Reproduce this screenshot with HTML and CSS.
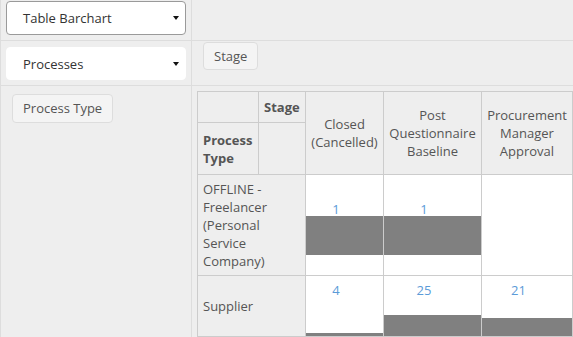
FILE: index.html
```html
<!DOCTYPE html>
<html lang="en">
<head>
<meta charset="utf-8">
<title>Pivot Table Barchart</title>
<link rel="stylesheet" href="styles.css">
</head>
<body>
<div class="pivot-ui">
  <div class="cell renderer-cell">
    <div class="dropdown focused">
      <span class="dropdown-text">Table Barchart</span>
      <svg class="caret" width="6" height="4" viewBox="0 0 6 4"><path d="M0 0H6L3 4Z"/></svg>
    </div>
  </div>
  <div class="cell unused-cell"></div>
  <div class="cell vals-cell">
    <div class="dropdown">
      <span class="dropdown-text">Processes</span>
      <svg class="caret" width="6" height="4" viewBox="0 0 6 4"><path d="M0 0H6L3 4Z"/></svg>
    </div>
  </div>
  <div class="cell cols-cell"><span class="attr">Stage</span></div>
  <div class="cell rows-cell"><span class="attr attr-tall">Process Type</span></div>
  <div class="cell output-cell">
    <table class="pvt-table">
      <colgroup>
        <col class="col-a"><col class="col-b"><col class="col-c"><col class="col-d"><col class="col-e"><col class="col-f">
      </colgroup>
      <thead>
        <tr class="hdr-top">
          <th class="corner"></th>
          <th class="axis-label">Stage</th>
          <th class="col-label" rowspan="2">Closed (Cancelled)</th>
          <th class="col-label" rowspan="2">Post Questionnaire Baseline</th>
          <th class="col-label" rowspan="2">Procurement Manager Approval</th>
          <th class="col-label" rowspan="2"></th>
        </tr>
        <tr class="hdr-bottom">
          <th class="axis-label row-axis">Process Type</th>
          <th class="corner"></th>
        </tr>
      </thead>
      <tbody>
        <tr class="data-row">
          <th class="row-label" colspan="2">OFFLINE - Freelancer (Personal Service Company)</th>
          <td class="val"><div class="bar-wrap"><div class="bar" style="height:71.4%"></div><span class="num">1</span></div></td>
          <td class="val"><div class="bar-wrap"><div class="bar" style="height:71.4%"></div><span class="num">1</span></div></td>
          <td class="val"></td>
          <td class="val"></td>
        </tr>
        <tr class="data-row">
          <th class="row-label" colspan="2">Supplier</th>
          <td class="val"><div class="bar-wrap"><div class="bar" style="height:5.5%"></div><span class="num">4</span></div></td>
          <td class="val"><div class="bar-wrap"><div class="bar" style="height:38.2%"></div><span class="num">25</span></div></td>
          <td class="val"><div class="bar-wrap"><div class="bar" style="height:32.7%"></div><span class="num">21</span></div></td>
          <td class="val"><div class="bar-wrap"><div class="bar" style="height:60%"></div></div></td>
        </tr>
      </tbody>
    </table>
  </div>
</div>
</body>
</html>
```

FILE: styles.css
```css
* { box-sizing: border-box; }

html, body {
  margin: 0;
  padding: 0;
  width: 573px;
  height: 337px;
  overflow: hidden;
  background: #eeeeee;
  font-family: "Open Sans", "Noto Sans", sans-serif;
  font-size: 13px;
  color: #555555;
}

.pivot-ui {
  display: grid;
  grid-template-columns: 190px 1fr;
  grid-template-rows: 40px 44px 1fr;
  gap: 1px;
  padding-left: 1px;
  width: 573px;
  height: 337px;
  background: #dddddd;
}

.cell {
  background: #eeeeee;
  min-width: 0;
  overflow: hidden;
}

.renderer-cell { padding: 1px 0 0 5px; }
.vals-cell { padding: 6px 0 0 5px; }

.dropdown {
  display: flex;
  align-items: center;
  justify-content: space-between;
  width: 180px;
  height: 33px;
  padding: 0 6px 0 16px;
  background: #ffffff;
  border: 1px solid #ffffff;
  border-radius: 4px;
  color: #333333;
  font-size: 13px;
}

.dropdown.focused {
  height: 34px;
  border-color: #9a9a9a;
}

.caret { fill: #111111; display: block; }

.cols-cell { padding: 1px 0 0 11px; }
.rows-cell { padding: 8px 0 0 11px; }

.attr {
  display: inline-block;
  height: 28px;
  line-height: 26px;
  padding: 0 10px;
  background: #f4f4f4;
  border: 1px solid #dddddd;
  border-radius: 4px;
  color: #555555;
  white-space: nowrap;
}

.attr-tall {
  height: 29px;
  line-height: 27px;
}

.output-cell { padding: 5px 0 0 5px; }

.pvt-table {
  border-collapse: collapse;
  table-layout: fixed;
  width: 466px;
  line-height: 18px;
  color: #555555;
}

.col-a { width: 61px; }
.col-b { width: 47px; }
.col-c { width: 78px; }
.col-d { width: 98px; }
.col-e { width: 91px; }
.col-f { width: 90px; }

.pvt-table th,
.pvt-table td {
  border: 1px solid #cccccc;
  padding: 5px;
}

.pvt-table th {
  background: #eeeeee;
  font-weight: normal;
  vertical-align: middle;
}

.hdr-top { height: 31px; }
.hdr-bottom { height: 52px; }

.axis-label {
  font-weight: bold !important;
  text-align: left;
}

.col-label { text-align: center; }

.row-label { text-align: left; }

.data-row th { vertical-align: middle; }

.pvt-table td.val {
  background: #ffffff;
  padding: 5px 0 0 0;
  text-align: center;
  vertical-align: middle;
}

.bar-wrap {
  position: relative;
  height: 55px;
}

.bar {
  position: absolute;
  left: 0;
  right: 0;
  bottom: 0;
  background: #808080;
}

.num {
  position: relative;
  display: block;
  padding: 0 17px 0 0;
  color: #5b9bd8;
}
```
